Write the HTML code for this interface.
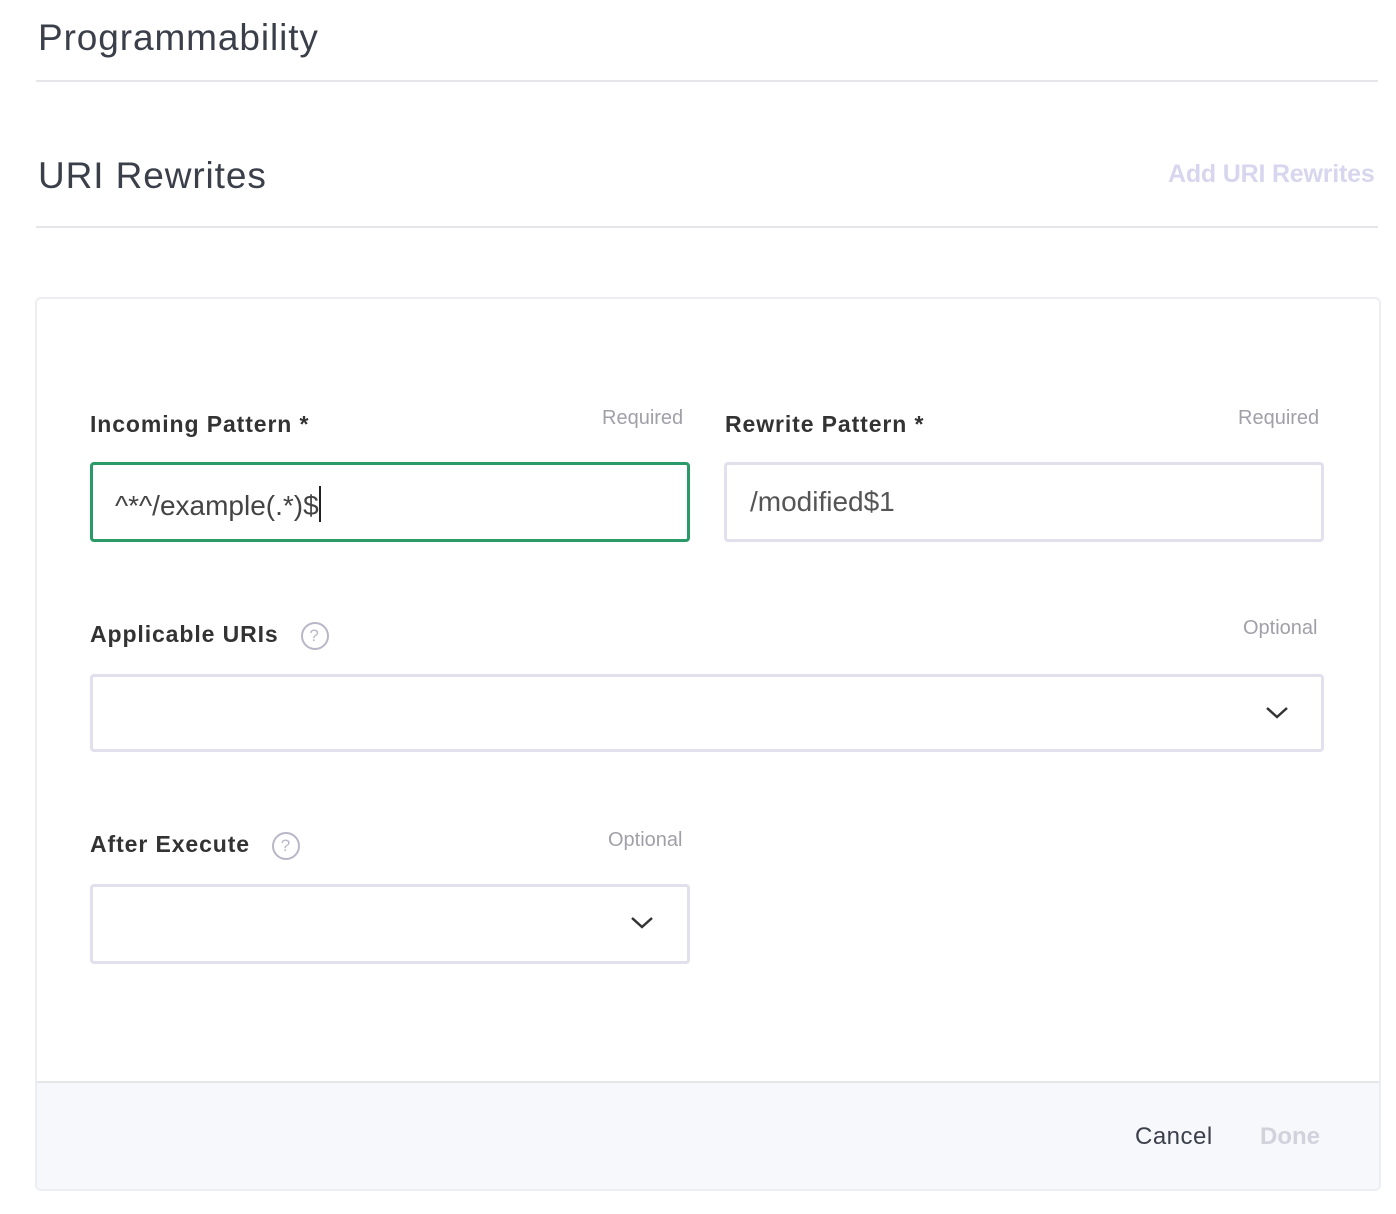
<!DOCTYPE html>
<html><head><style>
body{margin:0;width:1396px;height:1214px;background:#fff;font-family:"Liberation Sans",sans-serif;position:relative;overflow:hidden;color:#333}
.a{position:absolute}
.h{font-size:37px;color:#3a3f4a;left:38px;letter-spacing:0.9px}
.hr{left:36px;width:1342px;height:2px;background:#e6e6ea}
.lbl{font-size:23px;font-weight:bold;color:#333;letter-spacing:0.9px}
.req{font-size:20px;color:#a0a0a8}
.inp{box-sizing:border-box;border:3px solid #e2e0ec;border-radius:4px;background:#fff}
.q{display:inline-block;width:24px;height:24px;border:2px solid #b9b7c7;border-radius:50%;color:#b9b7c7;font-size:17px;text-align:center;line-height:24px;font-weight:normal;vertical-align:middle;margin-left:22px}
</style></head><body>
<div class="a h" style="top:17px">Programmability</div>
<div class="a hr" style="top:80px"></div>
<div class="a h" style="top:155px">URI Rewrites</div>
<div class="a" style="left:1168px;top:160px;font-size:25px;font-weight:bold;color:#d8d6ee;letter-spacing:-0.2px">Add URI Rewrites</div>
<div class="a hr" style="top:226px"></div>

<div class="a" style="left:35px;top:297px;width:1342px;height:890px;border:2px solid #eceef3;border-radius:6px;overflow:hidden">
  <div class="a" style="left:0;bottom:0;width:100%;height:106px;background:#f6f8fb;border-top:2px solid #e4e6ea"></div>
  <div class="a" style="left:1098px;bottom:38px;font-size:24px;color:#3a3f4a;letter-spacing:0.5px">Cancel</div>
  <div class="a" style="left:1223px;bottom:38px;font-size:24px;color:#d2d2dc;font-weight:bold">Done</div>
</div>

<div class="a lbl" style="left:90px;top:411px">Incoming Pattern *</div>
<div class="a req" style="left:602px;top:407px">Required</div>
<div class="a inp" style="left:90px;top:462px;width:600px;height:80px;border-color:#2a9a67"></div>
<div class="a" style="left:115px;top:486px;font-size:28px;color:#444">^*^/example(.*)$<span style="display:inline-block;width:2px;height:36px;background:#222;vertical-align:-7px"></span></div>

<div class="a lbl" style="left:725px;top:411px">Rewrite Pattern *</div>
<div class="a req" style="left:1238px;top:407px">Required</div>
<div class="a inp" style="left:724px;top:462px;width:600px;height:80px"></div>
<div class="a" style="left:750px;top:486px;font-size:28px;color:#555">/modified$1</div>

<div class="a lbl" style="left:90px;top:621px">Applicable URIs<span class="q">?</span></div>
<div class="a req" style="left:1243px;top:617px">Optional</div>
<div class="a inp" style="left:90px;top:674px;width:1234px;height:78px"></div>
<svg class="a" style="left:1265px;top:705px" width="24" height="16"><path d="M2 3 L12 12 L22 3" stroke="#333" stroke-width="2.5" fill="none"/></svg>

<div class="a lbl" style="left:90px;top:831px">After Execute<span class="q">?</span></div>
<div class="a req" style="left:608px;top:829px">Optional</div>
<div class="a inp" style="left:90px;top:884px;width:600px;height:80px"></div>
<svg class="a" style="left:630px;top:915px" width="24" height="16"><path d="M2 3 L12 12 L22 3" stroke="#333" stroke-width="2.5" fill="none"/></svg>
</body></html>
